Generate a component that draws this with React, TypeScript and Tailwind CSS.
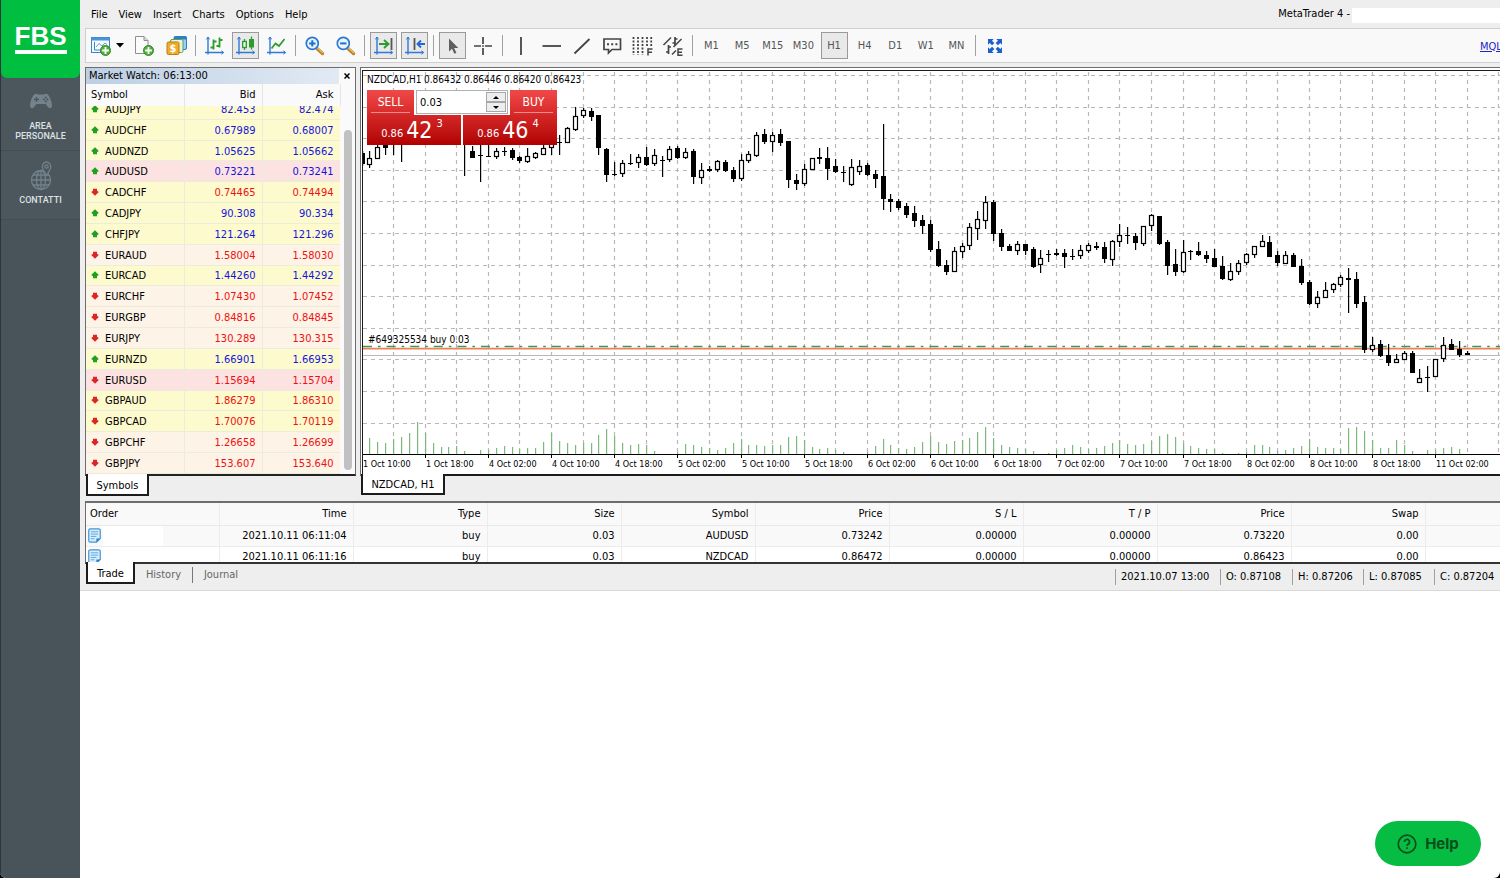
import type { ReactNode } from "react";

type Tone = "yellow" | "pink" | "peach";
type Quote = { symbol: string; bid: string; ask: string; up: boolean; tone: Tone };

const q = (symbol: string, bid: string, ask: string, up: boolean, tone: Tone): Quote => ({
  symbol, bid, ask, up, tone,
});

const quotes: Quote[] = [
  q("AUDJPY", "82.453", "82.474", true, "yellow"),
  q("AUDCHF", "0.67989", "0.68007", true, "yellow"),
  q("AUDNZD", "1.05625", "1.05662", true, "yellow"),
  q("AUDUSD", "0.73221", "0.73241", true, "pink"),
  q("CADCHF", "0.74465", "0.74494", false, "yellow"),
  q("CADJPY", "90.308", "90.334", true, "yellow"),
  q("CHFJPY", "121.264", "121.296", true, "yellow"),
  q("EURAUD", "1.58004", "1.58030", false, "peach"),
  q("EURCAD", "1.44260", "1.44292", true, "yellow"),
  q("EURCHF", "1.07430", "1.07452", false, "peach"),
  q("EURGBP", "0.84816", "0.84845", false, "peach"),
  q("EURJPY", "130.289", "130.315", false, "peach"),
  q("EURNZD", "1.66901", "1.66953", true, "yellow"),
  q("EURUSD", "1.15694", "1.15704", false, "pink"),
  q("GBPAUD", "1.86279", "1.86310", false, "yellow"),
  q("GBPCAD", "1.70076", "1.70119", false, "yellow"),
  q("GBPCHF", "1.26658", "1.26699", false, "peach"),
  q("GBPJPY", "153.607", "153.640", false, "peach"),
];

const toneClass: Record<Tone, string> = {
  yellow: "bg-[#fdfacd]",
  pink: "bg-[#fde2e2]",
  peach: "bg-[#fdf3e6]",
};

/* index, high, low, body top, body bottom, kind: 1 falling, 0 rising, 2 doji */
const candles: number[][] = [
  [0, 151, 165, 153, 163, 1], [1, 151, 167, 158, 164, 0], [2, 140, 158, 147, 158, 0], [3, 140, 154, 144, 147, 1],
  [4, 140, 154, 143, 143, 2], [5, 140, 161, 143, 143, 2], [13, 140, 175, 143, 143, 2], [14, 146, 157, 151, 157, 1],
  [15, 145, 181, 155, 155, 2], [16, 145, 156, 156, 156, 2], [17, 148, 158, 151, 156, 0], [18, 147, 155, 151, 151, 2],
  [19, 148, 159, 150, 157, 1], [20, 156, 162, 157, 160, 1], [21, 148, 162, 156, 161, 0], [22, 152, 158, 153, 157, 0],
  [23, 145, 154, 148, 154, 0], [24, 140, 154, 143, 147, 0], [25, 135, 154, 142, 142, 2], [26, 127, 142, 128, 142, 0],
  [27, 107, 130, 116, 129, 0], [28, 108, 117, 110, 115, 0], [29, 108, 120, 111, 116, 1], [30, 115, 154, 115, 147, 1],
  [31, 148, 181, 149, 174, 1], [32, 162, 175, 174, 174, 2], [33, 160, 176, 163, 173, 0], [34, 154, 164, 163, 163, 2],
  [35, 154, 167, 157, 162, 0], [36, 147, 165, 157, 164, 1], [37, 149, 165, 155, 163, 0], [38, 156, 176, 160, 160, 2],
  [39, 146, 161, 149, 159, 0], [40, 146, 158, 148, 157, 1], [41, 148, 158, 152, 157, 0], [42, 149, 183, 151, 176, 1],
  [43, 163, 183, 170, 177, 0], [44, 166, 171, 169, 170, 1], [45, 160, 171, 161, 169, 0], [46, 160, 171, 162, 170, 1],
  [47, 167, 181, 170, 178, 1], [48, 154, 180, 160, 178, 0], [49, 151, 162, 154, 160, 0], [50, 132, 156, 135, 155, 0],
  [51, 129, 143, 134, 141, 1], [52, 132, 151, 135, 141, 0], [53, 129, 145, 134, 142, 1], [54, 141, 187, 141, 179, 1],
  [55, 174, 189, 180, 183, 1], [56, 164, 185, 169, 183, 0], [57, 158, 169, 158, 169, 0], [58, 148, 163, 157, 158, 1],
  [59, 147, 179, 158, 168, 1], [60, 159, 172, 166, 171, 1], [61, 166, 181, 172, 172, 2], [62, 159, 185, 167, 184, 0],
  [63, 160, 174, 166, 171, 0], [64, 163, 175, 165, 174, 1], [65, 170, 187, 174, 178, 1], [66, 124, 209, 176, 198, 1],
  [67, 194, 211, 199, 201, 1], [68, 199, 209, 201, 207, 1], [69, 203, 217, 206, 214, 1], [70, 206, 226, 213, 220, 1],
  [71, 215, 233, 220, 225, 1], [72, 220, 251, 224, 249, 1], [73, 241, 266, 249, 265, 1], [74, 260, 274, 265, 271, 1],
  [75, 247, 271, 251, 271, 0], [76, 243, 257, 246, 251, 0], [77, 223, 249, 227, 245, 0], [78, 211, 239, 219, 228, 0],
  [79, 196, 228, 202, 220, 0], [80, 200, 240, 202, 233, 1], [81, 229, 250, 233, 246, 1], [82, 244, 250, 246, 250, 1],
  [83, 241, 254, 244, 250, 0], [84, 244, 254, 244, 250, 1], [85, 247, 267, 249, 266, 1], [86, 250, 272, 258, 264, 0],
  [87, 250, 261, 254, 254, 2], [88, 249, 255, 253, 254, 1], [89, 249, 267, 253, 256, 1], [90, 249, 259, 256, 256, 2],
  [91, 245, 258, 250, 255, 0], [92, 243, 252, 245, 250, 0], [93, 242, 249, 246, 247, 1], [94, 242, 262, 247, 258, 1],
  [95, 240, 265, 241, 259, 0], [96, 224, 246, 235, 241, 0], [97, 227, 243, 235, 235, 2], [98, 233, 249, 236, 242, 1],
  [99, 226, 245, 226, 243, 0], [100, 214, 230, 215, 225, 0], [101, 216, 244, 216, 243, 1], [102, 240, 274, 242, 265, 1],
  [103, 249, 275, 264, 271, 1], [104, 240, 272, 252, 271, 0], [105, 250, 259, 251, 251, 2], [106, 242, 255, 251, 254, 1],
  [107, 251, 262, 255, 258, 1], [108, 249, 266, 258, 266, 1], [109, 256, 279, 266, 278, 1], [110, 263, 280, 271, 279, 0],
  [111, 260, 274, 263, 271, 0], [112, 253, 264, 254, 262, 0], [113, 246, 257, 246, 254, 0], [114, 235, 246, 241, 246, 0],
  [115, 236, 256, 242, 256, 1], [116, 251, 265, 255, 262, 1], [117, 251, 263, 255, 263, 0], [118, 253, 266, 255, 266, 1],
  [119, 259, 284, 266, 282, 1], [120, 280, 304, 282, 303, 1], [121, 291, 307, 297, 303, 0], [122, 282, 297, 290, 297, 0],
  [123, 283, 292, 284, 289, 0], [124, 275, 286, 277, 284, 0], [125, 268, 312, 278, 279, 1], [126, 272, 307, 279, 303, 1],
  [127, 296, 352, 302, 349, 1], [128, 337, 351, 345, 349, 0], [129, 340, 356, 344, 355, 1], [130, 344, 365, 355, 362, 1],
  [131, 354, 362, 359, 362, 0], [132, 351, 359, 353, 359, 0], [133, 351, 372, 353, 372, 1], [134, 369, 382, 378, 382, 0],
  [135, 366, 391, 377, 377, 2], [136, 359, 376, 359, 376, 0], [137, 337, 361, 345, 358, 0], [138, 339, 349, 344, 349, 1],
  [139, 341, 356, 349, 354, 1], [140, 351, 354, 353, 354, 1],
];

const volumes: number[] = [
  0, 16, 12, 11, 15, 17, 21, 32, 21, 11, 7, 7, 8, 3, 0, 4, 4, 6, 8, 7, 5, 6, 6, 12, 21, 13, 11, 9, 11, 11, 19, 25, 18,
  11, 9, 10, 9, 3, 0, 0, 2, 10, 9, 7, 6, 4, 6, 11, 15, 9, 9, 8, 9, 9, 17, 18, 14, 7, 5, 6, 4, 2, 0, 0, 2, 8, 15, 9, 6,
  5, 7, 12, 18, 12, 10, 13, 14, 16, 22, 27, 16, 9, 7, 6, 5, 3, 0, 1, 4, 6, 9, 7, 5, 6, 8, 11, 14, 10, 9, 10, 13, 18, 20,
  17, 11, 8, 6, 5, 5, 1, 0, 1, 2, 9, 9, 7, 3, 4, 6, 8, 15, 7, 6, 6, 5, 26, 27, 23, 14, 6, 6, 14, 9, 3, 0, 4, 4, 6, 7, 5,
];

const axisLabels = [
  "1 Oct 10:00", "1 Oct 18:00", "4 Oct 02:00", "4 Oct 10:00", "4 Oct 18:00", "5 Oct 02:00", "5 Oct 10:00",
  "5 Oct 18:00", "6 Oct 02:00", "6 Oct 10:00", "6 Oct 18:00", "7 Oct 02:00", "7 Oct 10:00", "7 Oct 18:00",
  "8 Oct 02:00", "8 Oct 10:00", "8 Oct 18:00", "11 Oct 02:00",
];

const STEP = 7.894;
const candleX = (i: number) => Math.round(361.6 + STEP * i);

function PriceChart() {
  const gridX = Array.from({ length: 60 }, (_, k) => candleX(4 * (k + 1)) + 0.5);
  const gridY = Array.from({ length: 12 }, (_, k) => Math.round(75 + 31.6 * k) + 0.5);
  return (
    <svg className="block h-[404px] w-full" role="img" aria-label="NZDCAD, H1">
      <g transform="translate(-363 -71)">
        <g stroke="#b8b8b8" strokeDasharray="4 4" strokeWidth="1.2">
          {gridX.map((x) => <line key={x} x1={x} x2={x} y1={72} y2={454} />)}
          {gridY.map((y) => <line key={y} x1={363} x2={2400} y1={y} y2={y} />)}
        </g>
        <g fill="#7db87d">
          {volumes.map((v, i) => <rect key={i} x={candleX(i)} y={454 - v} width="1.2" height={v} />)}
        </g>
        <line x1={363} x2={2400} y1={355.5} y2={355.5} stroke="#b8b8b8" />
        <line x1={363} x2={2400} y1={346.5} y2={346.5} stroke="#3c9a4c" strokeWidth="1.6" strokeDasharray="9 6 2.6 6" />
        <line x1={363} x2={2400} y1={348.7} y2={348.7} stroke="#ee8058" strokeWidth="1.8" />
        {candles.map(([i, high, low, top, bottom, kind]) => {
          const x = candleX(i);
          return (
            <g key={i}>
              <rect x={x} y={high} width="1.2" height={low - high + 1} fill="#000" />
              {kind === 0 && (
                <rect x={x - 1.5} y={top + 0.5} width="4" height={Math.max(bottom - top, 2)} fill="#fff" stroke="#000" strokeWidth="1.2" />
              )}
              {kind === 1 && <rect x={x - 2} y={top} width="5" height={bottom - top + 1} fill="#000" />}
              {kind === 2 && <rect x={x - 2} y={top} width="5" height="1" fill="#000" />}
            </g>
          );
        })}
        <rect x={362} y={454} width={2000} height="1" fill="#000" />
        {axisLabels.map((label, k) => {
          const x = candleX(8 * k);
          return (
            <g key={label}>
              <rect x={x} y={455} width="1" height="3" fill="#000" />
              <text x={x + 1} y={467} fontSize="9" fill="#000">{label}</text>
            </g>
          );
        })}
        <g fontSize="10" fill="#000">
          <text x={367} y={83}>NZDCAD,H1</text>
          <text x={424} y={83}>0.86432 0.86446 0.86420 0.86423</text>
          <text x={368} y={343}>#649325534 buy 0.03</text>
        </g>
      </g>
    </svg>
  );
}

function Icon({ children, size = 22 }: { children: ReactNode; size?: number }) {
  return (
    <svg width={size} height={size} viewBox="0 0 22 22" fill="none" aria-hidden="true" className="shrink-0">
      {children}
    </svg>
  );
}

const Axes = () => (
  <g stroke="#2f79d8" strokeWidth="1.4">
    <path d="M4 2v17.5M1 17.5h18" />
    <path d="M2.4 4.4 4 2l1.6 2.4M17.4 15.8 19.8 17.5l-2.4 1.7" strokeWidth="1" />
  </g>
);

const Plus = ({ x, y }: { x: number; y: number }) => (
  <g>
    <circle cx={x} cy={y} r="5" fill="#4fae3c" stroke="#2e8a25" />
    <path d={`M${x - 3.4} ${y}h6.8M${x} ${y - 3.4}v6.8`} stroke="#fff" strokeWidth="1.8" />
  </g>
);

const Lens = ({ plus }: { plus: boolean }) => (
  <Icon>
    <path d="m13 13.500 5.500 5" stroke="#b9802a" strokeWidth="3.400" strokeLinecap="round" />
    <path d="m13.500 13 5.200 4.800" stroke="#eebd62" strokeWidth="1.200" strokeLinecap="round" />
    <circle cx="8.300" cy="8.400" r="6" fill="#e8f4ff" stroke="#2a78d2" strokeWidth="1.700" />
    <path d={plus ? "M5.1 8.4h6.4M8.3 5.2v6.4" : "M5.1 8.4h6.4"} stroke="#1f6ed0" strokeWidth="2" />
  </Icon>
);

function Tool({ label, pressed, wide, children }: { label: string; pressed?: boolean; wide?: boolean; children: ReactNode }) {
  return (
    <button
      type="button"
      aria-label={label}
      className={`flex h-[27px] shrink-0 items-center justify-center ${wide ? "w-9 gap-1" : "w-[27px]"} ${
        pressed ? "border border-[#9a9a9a] bg-[#e9e9e9]" : ""
      }`}
    >
      {children}
    </button>
  );
}

const Separator = () => <div className="h-[21px] w-px shrink-0 bg-[#a0a0a0]" />;

function Toolbar() {
  return (
    <div className="ml-[5px] flex h-[35px] items-center gap-[5px] overflow-hidden border-y border-l border-[#cfcfcf] bg-[#f9f9f9] pl-[3px]">
      <div className="flex w-[101px] shrink-0 items-center justify-between">
        <Tool label="New chart" wide>
          <Icon>
            <rect x="1.500" y="2.500" width="18" height="15" fill="#f4faff" stroke="#3d82cc" />
            <path d="M1.500 4h18" stroke="#4b94dc" strokeWidth="3" />
            <path d="M4.500 7v8h11" stroke="#3d82cc" />
            <path d="m6 12 3-3.500 3 2.500 3-3 2 1.500" stroke="#64a2b8" />
            <Plus x={15.5} y={15.5} />
          </Icon>
          <svg width="8" height="5" viewBox="0 0 8 5" aria-hidden="true"><path d="M0 0h8L4 4.500z" fill="#000" /></svg>
        </Tool>
        <Tool label="New order">
          <Icon>
            <path d="M2.500 1.500h8.500l4 4v13H2.500z" fill="#fbfbfb" stroke="#8e8e8e" />
            <path d="M11 1.500v4h4" fill="#dcdcdc" stroke="#8e8e8e" />
            <Plus x={15.5} y={15.5} />
          </Icon>
        </Tool>
        <Tool label="Accounts">
          <Icon>
            <rect x="8" y="1.500" width="12.500" height="13" rx="1.500" fill="#9bd0f5" stroke="#2f7ec6" />
            <path d="M8 3h12.500" stroke="#2f7ec6" strokeWidth="3" />
            <rect x="4.500" y="4.500" width="12.500" height="13" rx="1.500" fill="#e8f3d8" stroke="#5fa348" />
            <rect x="1" y="7" width="12" height="12.500" rx="1.500" fill="#f0ac28" stroke="#bb7a14" />
            <text x="7" y="17" fontSize="11" fontWeight="bold" fill="#fff" textAnchor="middle">$</text>
          </Icon>
        </Tool>
      </div>
      <Separator />
      <div className="flex w-[89px] shrink-0 items-center justify-between">
        <Tool label="Bar chart">
          <Icon>
            <Axes />
            <path d="M9.500 4.500v10M6.500 12.500h3M9.500 6.500h3M15.500 2.500v10M12.500 11h3M15.500 5h3" stroke="#2d9b2d" strokeWidth="1.800" />
          </Icon>
        </Tool>
        <Tool label="Candlesticks" pressed>
          <Icon>
            <Axes />
            <path d="M9.500 4v11M16.500 1.500v13" stroke="#2d9b2d" strokeWidth="1.300" />
            <rect x="7.700" y="6.500" width="3.600" height="6" fill="#fff" stroke="#2d9b2d" strokeWidth="1.400" />
            <rect x="14" y="4" width="5" height="8.500" fill="#2d9b2d" />
          </Icon>
        </Tool>
        <Tool label="Line chart">
          <Icon><Axes /><path d="m5.500 13.500 4-5 3.500 2.500 5.500-7" stroke="#2d9b2d" strokeWidth="1.700" /></Icon>
        </Tool>
      </div>
      <Separator />
      <div className="flex w-[58px] shrink-0 items-center justify-between">
        <Tool label="Zoom in"><Lens plus /></Tool>
        <Tool label="Zoom out"><Lens plus={false} /></Tool>
      </div>
      <Separator />
      <div className="flex w-[58px] shrink-0 items-center justify-between">
        <Tool label="Auto scroll" pressed>
          <Icon>
            <Axes />
            <path d="M6 9h9M11 5l4.500 4-4.500 4" stroke="#2d9b2d" strokeWidth="1.900" />
            <path d="M18.500 3v12" stroke="#555" strokeWidth="1.800" />
          </Icon>
        </Tool>
        <Tool label="Chart shift" pressed>
          <Icon>
            <Axes />
            <path d="M10.500 3v12" stroke="#555" strokeWidth="1.800" />
            <path d="M21 9h-7M17 5.500 13.500 9l3.500 3.500" stroke="#2468d4" strokeWidth="1.900" />
          </Icon>
        </Tool>
      </div>
      <Separator />
      <div className="flex w-[58px] shrink-0 items-center justify-between">
        <Tool label="Cursor" pressed>
          <Icon><path d="M7 3.500v13l3-2.800 2.400 5 2-1-2.300-4.800h4.200z" fill="#5e5e5e" /></Icon>
        </Tool>
        <Tool label="Crosshair">
          <Icon>
            <path d="M10 2v7M10 13v7M1 11h7M12 11h7" stroke="#444" strokeWidth="1.700" />
            <rect x="9.200" y="10.200" width="1.600" height="1.600" fill="#444" />
          </Icon>
        </Tool>
      </div>
      <Separator />
      <div className="flex w-[179px] shrink-0 items-center justify-between">
        <Tool label="Vertical line"><Icon><path d="M10 2v18" stroke="#444" strokeWidth="1.800" /></Icon></Tool>
        <Tool label="Horizontal line"><Icon><path d="M1.500 11h18.500" stroke="#444" strokeWidth="1.800" /></Icon></Tool>
        <Tool label="Trend line"><Icon><path d="M3.500 18.500 18.500 4" stroke="#444" strokeWidth="1.800" /></Icon></Tool>
        <Tool label="Text label">
          <Icon>
            <path d="M2 4h16.500v10.500h-8.500L6.500 18v-3.500H2z" stroke="#444" strokeWidth="1.700" />
            <path d="M5 9.300h2M9.200 9.300h2M13.400 9.300h2" stroke="#444" strokeWidth="2" />
          </Icon>
        </Tool>
        <Tool label="Fibonacci">
          <Icon>
            <g stroke="#444" strokeWidth="1.800" strokeDasharray="2 1.500">
              <path d="M1.500 2v18M6 2v18M10.500 2v18M15 2v10M19.200 2v10" />
            </g>
            <path d="M16 20.500V14h4.500M16 17.200h4" stroke="#444" strokeWidth="1.500" />
          </Icon>
        </Tool>
        <Tool label="Channels">
          <Icon>
            <path d="M1.500 10 9 2.500M11.500 12l8-8" stroke="#444" strokeWidth="1.500" />
            <path d="M6.500 10v9M4 17h2.500M6.500 12H9M13 2v8.500M10.500 8H13M13 4h2.500" stroke="#444" strokeWidth="1.700" />
            <path d="M20.500 14H16v6.300h4.500M16 17.200h4M10 19.500l4-4" stroke="#444" strokeWidth="1.500" />
          </Icon>
        </Tool>
      </div>
      <Separator />
      <div className="flex w-[272px] shrink-0 items-center justify-between text-[11px] text-[#555]">
        {["M1", "M5", "M15", "M30", "H1", "H4", "D1", "W1", "MN"].map((frame) => (
          <Tool key={frame} label={frame} pressed={frame === "H1"}>{frame}</Tool>
        ))}
      </div>
      <Separator />
      <Tool label="Full screen">
        <Icon size={14}>
          <g fill="#1b5fd0">
            <path d="M0 0h9L6.300 2.700 10 6.400 6.400 10 2.700 6.300 0 9z" />
            <path d="M22 0v9l-2.700-2.700L15.600 10 12 6.400l3.700-3.700L13 0z" />
            <path d="M22 22h-9l2.700-2.700L12 15.600l3.600-3.600 3.700 3.700L22 13z" />
            <path d="M0 22v-9l2.700 2.700L6.400 12l3.600 3.600-3.700 3.700L9 22z" />
          </g>
        </Icon>
      </Tool>
      <a href="#mql5" className="ml-auto w-5 shrink-0 overflow-hidden pt-[2px] text-[11px] text-[#2222cc] underline">MQL5</a>
    </div>
  );
}

function QuoteArrow({ up }: { up: boolean }) {
  return (
    <svg width="8" height="8" viewBox="0 0 8 8" aria-hidden="true" className={up ? "mb-[2px] shrink-0" : "mb-[2px] shrink-0 rotate-180"}>
      <path d="M4 .2 7.800 4 6 5.300V7.300H2V5.300L.2 4z" fill={up ? "#1fa01f" : "#dc2626"} />
    </svg>
  );
}

function MarketWatch() {
  const head = "h-[22px] border-r border-[#e6e6e6] font-normal";
  const cell = "border-r border-[#ececdc] p-0 pt-[2px] leading-4";
  return (
    <section className="flex h-[409px] w-[271px] shrink-0 flex-col border border-[#6d6d6d] border-b-2 border-b-[#222] bg-[#fafafa]">
      <header className="flex h-4 items-center justify-between bg-linear-to-r from-[#bccfe3] to-[#e4ecf5] pl-[3px]">
        <h2>Market Watch: 06:13:00</h2>
        <button type="button" aria-label="Close" className="flex h-4 w-4 items-center justify-center bg-[#fafafa]">
          <svg width="6" height="6" viewBox="0 0 6 6" aria-hidden="true"><path d="M.5.5l5 5M5.500.5l-5 5" stroke="#000" strokeWidth="1.500" /></svg>
        </button>
      </header>
      <table className="w-[254px] table-fixed border-collapse">
        <thead>
          <tr>
            <th className={`${head} w-[98px] pl-[5px] text-left`}>Symbol</th>
            <th className={`${head} w-[78px] pr-[6px] text-right`}>Bid</th>
            <th className={`${head} w-[78px] pr-[6px] text-right`}>Ask</th>
          </tr>
        </thead>
      </table>
      <div className="flex min-h-0 flex-1">
        <div className="flex w-[254px] flex-col justify-end overflow-hidden">
          <table className="h-[375px] w-full shrink-0 table-fixed border-collapse" aria-label="Quotes">
            <tbody>
              {quotes.map((row) => (
                <tr key={row.symbol} className={`${toneClass[row.tone]} border-b border-[#ececdc]`}>
                  <td className={`${cell} w-[98px] pl-[5px]`}>
                    <span className="flex items-center gap-[6px]"><QuoteArrow up={row.up} />{row.symbol}</span>
                  </td>
                  <td className={`${cell} w-[78px] pr-[6px] text-right ${row.up ? "text-[#1414e0]" : "text-[#ee1111]"}`}>{row.bid}</td>
                  <td className={`${cell} w-[78px] pr-[6px] text-right ${row.up ? "text-[#1414e0]" : "text-[#ee1111]"}`}>{row.ask}</td>
                </tr>
              ))}
            </tbody>
          </table>
        </div>
        <div className="flex flex-1 flex-col items-center pt-6 pb-1">
          <div className="w-2 flex-1 rounded-full bg-[#c1c1c1]" />
        </div>
      </div>
    </section>
  );
}

function Price({ big, pip }: { big: string; pip: string }) {
  return (
    <span className="flex h-[30px] flex-1 items-end justify-center bg-linear-to-b from-[#d42626] to-[#b00000] pr-1 pb-[3px] text-white">
      <span className="text-[11px] leading-4">0.86</span>
      <span className="ml-[3px] text-[23px] leading-6">{big}</span>
      <span className="mb-3 ml-1 text-[11px] leading-3">{pip}</span>
    </span>
  );
}

function OneClickTrading() {
  const side =
    "flex h-[25px] w-[47px] items-start justify-center bg-linear-to-b from-[#f04848] to-[#d62828] text-xs text-white";
  const label = "w-[39px] border-b border-[#f08c8c] pt-[2px] leading-5";
  return (
    <div className="absolute top-[19px] left-[4px] w-[190px]">
      <div className="flex items-start justify-between bg-white">
        <button type="button" className={side}><span className={label}>SELL</span></button>
        <div className="flex h-6 w-[92px] items-stretch border border-[#b0b0b0] bg-white p-px">
          <input aria-label="Volume" defaultValue="0.03" className="w-0 min-w-0 flex-1 px-[2px] pt-[2px] text-[11px] outline-none" />
          <div className="flex w-5 flex-col">
            <button type="button" aria-label="Increase volume" className="flex flex-1 items-center justify-center border border-[#a8a8a8] bg-[#ededed]">
              <svg width="6" height="3" viewBox="0 0 6 3" aria-hidden="true"><path d="M0 3h6L3 0z" /></svg>
            </button>
            <button type="button" aria-label="Decrease volume" className="flex flex-1 items-center justify-center border border-[#a8a8a8] bg-[#ededed]">
              <svg width="6" height="3" viewBox="0 0 6 3" aria-hidden="true"><path d="M0 0h6L3 3z" /></svg>
            </button>
          </div>
        </div>
        <button type="button" className={side}><span className={label}>BUY</span></button>
      </div>
      <div className="flex gap-[2px] bg-white">
        <Price big="42" pip="3" />
        <Price big="46" pip="4" />
      </div>
    </div>
  );
}

const tradeHead = ["Time", "Type", "Size", "Symbol", "Price", "S / L", "T / P", "Price", "Swap"];
const trades = [
  ["2021.10.11 06:11:04", "buy", "0.03", "AUDUSD", "0.73242", "0.00000", "0.00000", "0.73220", "0.00"],
  ["2021.10.11 06:11:16", "buy", "0.03", "NZDCAD", "0.86472", "0.00000", "0.00000", "0.86423", "0.00"],
];

function OrderIcon() {
  return (
    <svg width="13" height="15" viewBox="0 0 14 16" fill="none" aria-hidden="true">
      <path d="M2.500.8h9a1.700 1.700 0 0 1 1.700 1.700v8.700l-4 4H2.500A1.700 1.700 0 0 1 .8 13.500v-11A1.700 1.700 0 0 1 2.500.8z" fill="#d8ecfb" stroke="#4596d6" strokeWidth="1.300" />
      <path d="M9 15.200v-4h4.200z" fill="#2f7fc4" />
      <path d="M3 4h8M3 6.500h8M3 9h6M3 11.500h4" stroke="#5aa5df" />
    </svg>
  );
}

function TradeTerminal() {
  const cell = "border-r border-[#ececec] p-0 pr-[6px] text-right font-normal";
  return (
    <div className="ml-[5px] h-[63px] overflow-hidden border-t-2 border-b-2 border-l border-t-[#6d6d6d] border-b-[#333] border-l-[#6d6d6d] bg-[#f9f9f9]">
      <table className="w-full table-fixed border-collapse">
        <thead>
          <tr className="h-[22px] border-b border-[#e8e8e8]">
            <th className="w-[133px] border-r border-[#ececec] p-0 pl-[4px] text-left font-normal">Order</th>
            {tradeHead.map((title, i) => <th key={i} className={`${cell} w-[134px]`}>{title}</th>)}
            <th className="p-0"><span className="sr-only">Profit</span></th>
          </tr>
        </thead>
        <tbody>
          {trades.map((row, r) => (
            <tr key={r} className={`h-[21px] border-b border-[#ececec] ${r === 1 ? "bg-white" : ""}`}>
              <td className="border-r border-[#ececec] p-0">
                <div className="flex h-5 items-center gap-[2px] pl-[2px]">
                  <OrderIcon />
                  <div className="h-5 w-15 bg-white" />
                </div>
              </td>
              {row.map((value, i) => <td key={i} className={cell}>{value}</td>)}
              <td />
            </tr>
          ))}
        </tbody>
      </table>
    </div>
  );
}

const tab = "relative z-10 -mt-[2px] flex items-center justify-center border-x-2 border-b-2 border-[#1c1c1c] bg-white pt-[3px]";

export default function App() {
  return (
    <div className="min-h-screen bg-black font-['DejaVu_Sans_Condensed','DejaVu_Sans',sans-serif] text-[11px] leading-4 text-black">
      <div className="flex min-h-screen overflow-hidden rounded-b-md bg-white">
        <aside className="w-20 shrink-0 border-l border-[#2d3539] bg-[#48545a]">
          <a href="#home" className="flex h-[78px] flex-col items-center rounded-b-md bg-[#00be3f] pt-[22px] font-['Liberation_Sans',sans-serif] text-[26px] leading-7 font-bold text-white">
            <span className="border-b-4 border-white">FBS</span>
          </a>
          <nav className="bg-[#4b575d] text-center font-['Roboto',sans-serif] text-[9px] leading-[10px] font-medium text-[#dde1e3]">
            <a href="#area" className="flex h-[73px] flex-col items-center border-b border-[#434e54] pt-[15px]">
              <svg width="24" height="16" viewBox="0 0 24 16" aria-hidden="true">
                <path d="M6 1c1.500-.8 3 .6 4 .6h4c1 0 2.500-1.400 4-.6 2.500 1.300 5 8 5 11.500 0 3-2.500 3.500-4 1.500L16.500 11h-9L5 14c-1.500 2-4 1.500-4-1.500C1 9 3.500 2.300 6 1z" fill="#73828b" />
                <path d="M5 6.500h5M7.500 4v5" stroke="#4b575d" strokeWidth="1.300" />
                <circle cx="15" cy="6.500" r="1" fill="#4b575d" /><circle cx="18.500" cy="6.500" r="1" fill="#4b575d" />
                <circle cx="16.800" cy="4.600" r="1" fill="#4b575d" /><circle cx="16.800" cy="8.400" r="1" fill="#4b575d" />
              </svg>
              <span className="mt-3 w-16">AREA PERSONALE</span>
            </a>
            <a href="#contacts" className="flex h-[69px] flex-col items-center border-b border-[#434e54] pt-[10px]">
              <svg width="24" height="30" viewBox="0 0 24 30" fill="none" stroke="#73828b" strokeWidth="1.300" aria-hidden="true">
                <circle cx="12" cy="19" r="9.500" />
                <ellipse cx="12" cy="19" rx="4.500" ry="9.500" />
                <path d="M12 9.500v19M2.500 19h19M4 14h16M4 24h16" />
                <path d="M17.500 14.500 14 8.500c-2-4 .5-7.500 3.500-7.500s5.500 3.500 3.500 7.500z" fill="#4b575d" />
                <circle cx="17.500" cy="5.500" r="1.600" />
              </svg>
              <span className="mt-1">CONTATTI</span>
            </a>
          </nav>
        </aside>

        <main className="min-w-0 flex-1">
          <div className="bg-[#eeeeee]">
            <div className="flex h-7 items-center justify-between">
              <nav className="flex gap-[11px] pt-[2px] pl-[11px]">
                {["File", "View", "Insert", "Charts", "Options", "Help"].map((item) => (
                  <button key={item} type="button">{item}</button>
                ))}
              </nav>
              <div className="flex items-center gap-[2px]">
                <span>MetaTrader 4 -</span>
                <div className="mt-[2px] h-[15px] w-[148px] bg-white" />
              </div>
            </div>
            <Toolbar />
            <div className="flex items-start gap-1 pt-1 pl-[5px]">
              <div>
                <MarketWatch />
                <div className="flex h-[25px] items-start pl-px">
                  <button type="button" className={`${tab} h-[22px] w-[63px]`}>Symbols</button>
                </div>
              </div>
              <section className="min-w-0 flex-1">
                <div className="relative h-[409px] overflow-hidden border-t border-l border-[#6d6d6d] bg-white pt-[2px] pl-px">
                  <div className="relative h-full border-t border-b-2 border-l border-[#1c1c1c]">
                    <PriceChart />
                    <OneClickTrading />
                  </div>
                </div>
                <div className="flex h-[25px] items-start pl-px">
                  <button type="button" className={`${tab} h-[21px] w-[84px]`}>NZDCAD, H1</button>
                </div>
              </section>
            </div>
            <TradeTerminal />
            <div className="flex h-[27px] items-start justify-between border-b border-[#d8d8d8] pl-[6px]">
              <div className="flex items-start text-[#666]">
                <button type="button" className={`${tab} h-[22px] w-[49px] text-black`}>Trade</button>
                <button type="button" className="mt-[3px] w-[58px] border-r border-[#777] leading-4">History</button>
                <button type="button" className="mt-[3px] w-14 leading-4">Journal</button>
              </div>
              <div className="flex items-center pt-[5px]">
                <span className="w-[105px] border-l border-[#a0a0a0] pl-[5px]">2021.10.07 13:00</span>
                <span className="w-[72px] border-l border-[#a0a0a0] pl-[5px]">O: 0.87108</span>
                <span className="w-[71px] border-l border-[#a0a0a0] pl-[5px]">H: 0.87206</span>
                <span className="w-[71px] border-l border-[#a0a0a0] pl-[5px]">L: 0.87085</span>
                <span className="w-[66px] border-l border-[#a0a0a0] pl-[5px]">C: 0.87204</span>
              </div>
            </div>
          </div>
        </main>
      </div>

      <button type="button" className="fixed right-[19px] bottom-3 flex h-[45px] w-[106px] items-center justify-center gap-2 rounded-full bg-[#06bc42] font-['Inter',sans-serif] text-[15px] font-bold text-[#0b4d1c]">
        <svg width="20" height="20" viewBox="0 0 20 20" fill="none" stroke="#0b4d1c" strokeWidth="1.700" aria-hidden="true">
          <circle cx="10" cy="10" r="8.800" />
          <path d="M7.500 8a2.500 2.500 0 1 1 3.600 2.200c-.8.400-1.100.8-1.100 1.600" />
          <path d="M10 13.300v1.800" />
        </svg>
        Help
      </button>
    </div>
  );
}
